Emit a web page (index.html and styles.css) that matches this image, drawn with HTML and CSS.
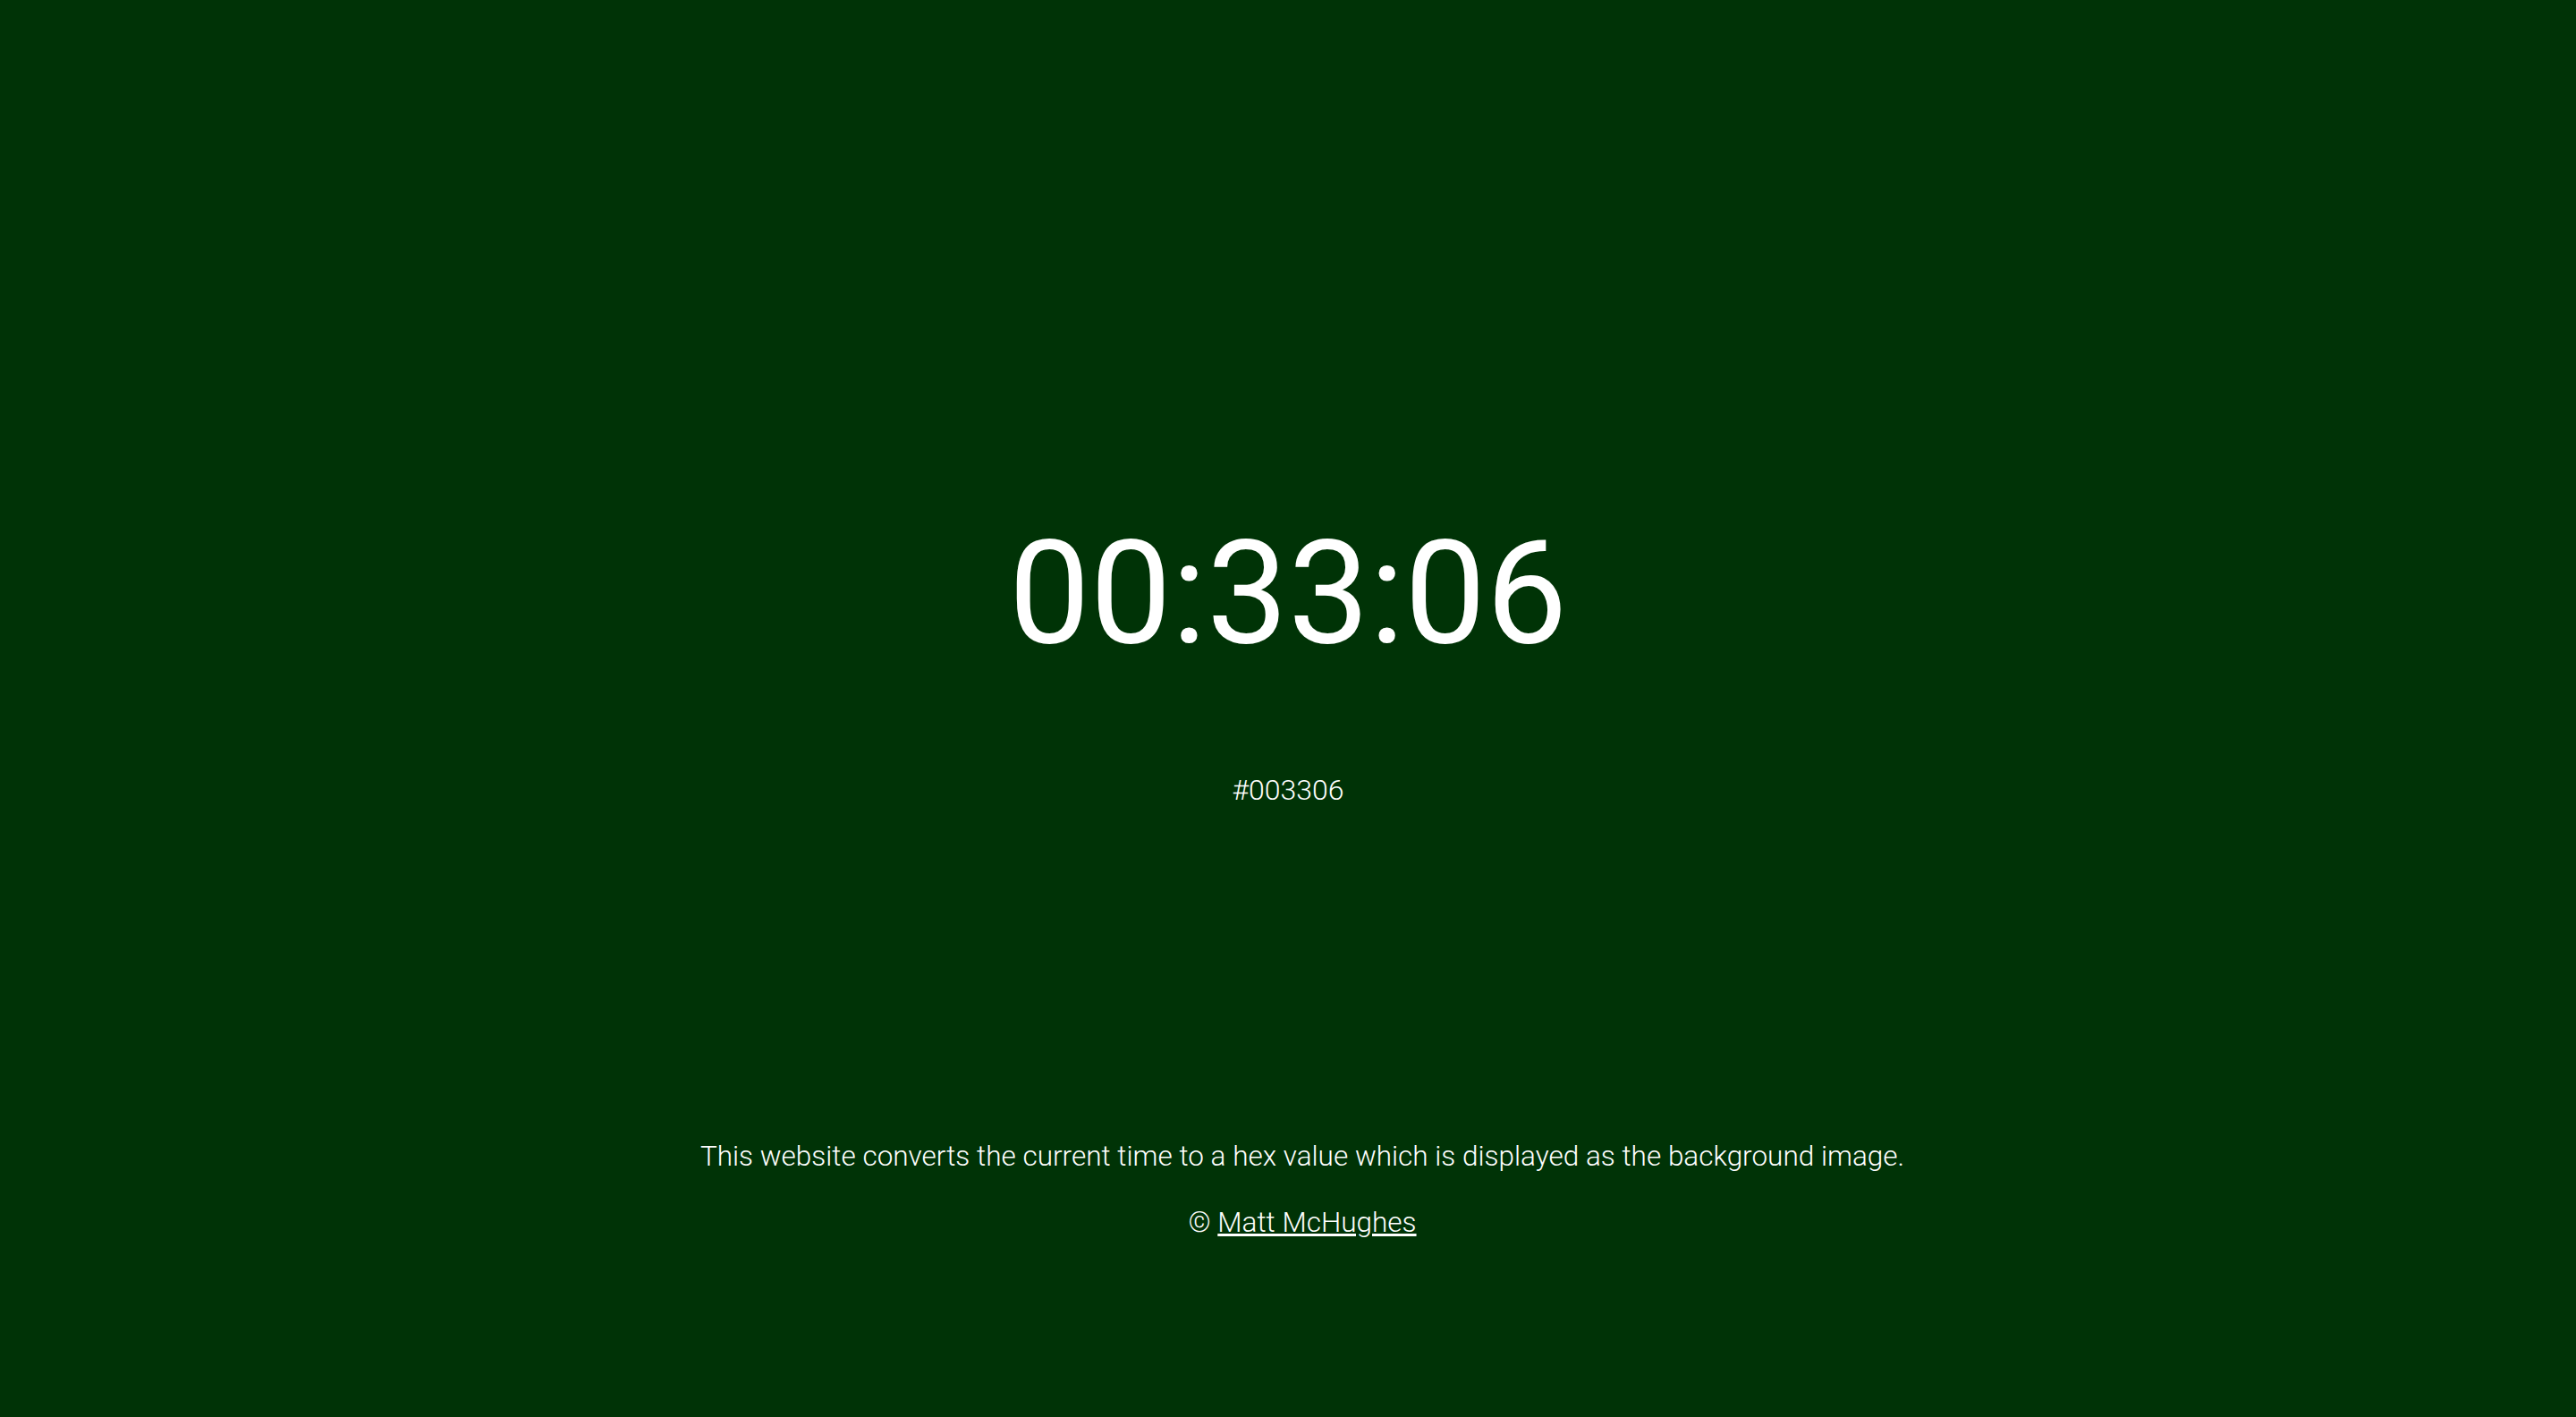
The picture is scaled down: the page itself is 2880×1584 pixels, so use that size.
FILE: index.html
```html
<!DOCTYPE html>
<html lang="en">
<head>
<meta charset="utf-8">
<title>Hex Clock</title>
<link rel="stylesheet" href="styles.css">
</head>
<body>
<div class="page">
  <main class="clock">
    <h1 class="time">00:33:06</h1>
    <p class="hex">#003306</p>
  </main>
  <footer class="footer">
    <p class="about">This website converts the current time to a hex value which is displayed as the background image.</p>
    <p class="credit">© <a href="#" class="author">Matt McHughes</a></p>
  </footer>
</div>
</body>
</html>
```
FILE: styles.css
```css
html, body {
  margin: 0;
  padding: 0;
  height: 100%;
}
body {
  background: #003306;
  color: #ffffff;
  font-family: Roboto, "Liberation Sans", sans-serif;
}
.page {
  height: 100%;
  box-sizing: border-box;
  display: flex;
  flex-direction: column;
  align-items: center;
}
.clock {
  display: flex;
  flex-direction: column;
  align-items: center;
  padding-top: 583px;
}
.time {
  margin: 0;
  font-weight: 400;
  font-size: 162px;
  line-height: 160px;
}
.hex {
  margin: 122px 0 0;
  font-weight: 300;
  font-size: 32px;
  line-height: 37px;
}
.footer {
  margin-top: auto;
  padding: 0 0 199px 32px;
  display: flex;
  flex-direction: column;
  align-items: center;
  gap: 37px;
  font-weight: 300;
  font-size: 31.5px;
  line-height: 37px;
}
.footer p {
  margin: 0;
}
.author {
  color: #ffffff;
}
```
